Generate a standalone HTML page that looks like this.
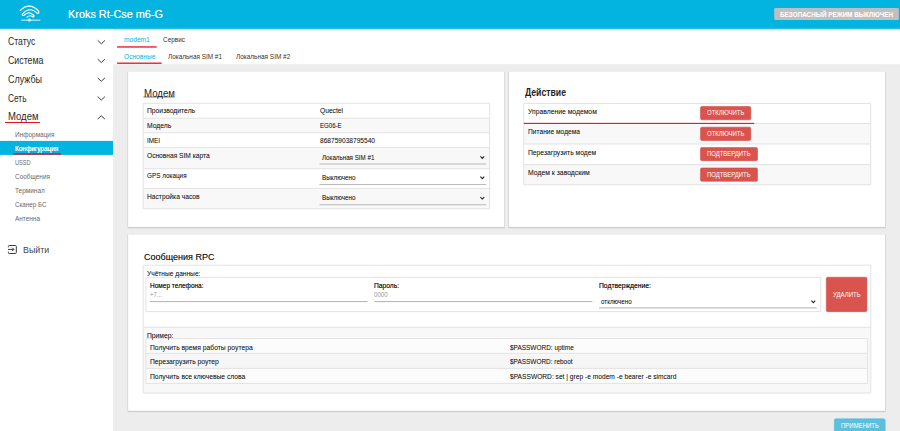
<!DOCTYPE html>
<html lang="ru"><head><meta charset="utf-8"><title>Kroks Rt-Cse m6-G</title>
<style>
html,body{margin:0;padding:0;width:900px;height:431px;overflow:hidden;background:#ededed}
#p{position:relative;width:900px;height:431px;overflow:hidden;font-family:"Liberation Sans",sans-serif}
#p svg{position:absolute;left:0;top:0}
#p span{position:absolute;white-space:pre;transform-origin:0 50%;line-height:12px;height:12px;}
#p b{font-weight:bold}
</style></head><body><div id="p">
<svg width="900" height="431" viewBox="0 0 900 431">
<rect x="0.00" y="0.00" width="900.00" height="431.00" fill="#ededed"/>
<rect x="0.00" y="28.00" width="113.10" height="403.00" fill="#fff"/>
<rect x="113.10" y="28.00" width="786.90" height="36.20" fill="#fff"/>
<rect x="0.00" y="0.00" width="900.00" height="28.90" fill="#03b4e1"/>
<rect x="0.00" y="28.90" width="113.10" height="1.10" fill="#ecdfdb"/>
<rect x="113.10" y="28.90" width="786.90" height="1.10" fill="#dcd2ce"/>
<rect x="113.10" y="30.00" width="786.90" height="1.00" fill="#f3f3f3"/>
<g fill="none" stroke="#fff" stroke-linecap="round" stroke-linejoin="round"><path d="M20.3 10.5 Q29.5 1.7 38.5 11.0 Q39.6 13.4 37.4 13.3 Q29.6 5.9 22.5 13.8 Q21.7 15.8 23.7 15.5 Q28.9 10.3 33.8 15.5 Q34.4 17.2 33.0 17.0 Q29.9 14.4 27.0 17.2" stroke-width="1.15"/><path d="M21.2 20.15 H40.4" stroke-width="0.85" stroke-linecap="butt"/></g><circle cx="29.3" cy="20.1" r="1.5" fill="#fff"/>
<rect x="774.20" y="7.90" width="124.70" height="12.20" fill="#bfbfbf" rx="1.3"/>
<path d="M97.7 40.40 L101.3 43.80 L104.9 40.40" fill="none" stroke="#3c3c3c" stroke-width="1.0"/>
<path d="M97.7 59.15 L101.3 62.55 L104.9 59.15" fill="none" stroke="#3c3c3c" stroke-width="1.0"/>
<path d="M97.7 77.90 L101.3 81.30 L104.9 77.90" fill="none" stroke="#3c3c3c" stroke-width="1.0"/>
<path d="M97.7 96.65 L101.3 100.05 L104.9 96.65" fill="none" stroke="#3c3c3c" stroke-width="1.0"/>
<path d="M97.7 119.10 L101.3 115.80 L104.9 119.10" fill="none" stroke="#3c3c3c" stroke-width="1.0"/>
<rect x="5.00" y="122.00" width="35.00" height="1.00" fill="#e4111f"/>
<rect x="0.00" y="140.90" width="113.10" height="14.00" fill="#03b4e1"/>
<rect x="13.00" y="153.30" width="48.00" height="1.40" fill="#e4111f"/>
<g fill="none" stroke="#3a3a3a" stroke-width="1.0" stroke-linejoin="round"><path d="M8.4 247.3 V246.4 Q8.4 245.5 9.3 245.5 H15.4 Q16.3 245.5 16.3 246.4 V252.6 Q16.3 253.5 15.4 253.5 H9.3 Q8.4 253.5 8.4 252.6 V251.6"/><path d="M8.0 249.4 H13.8 M12.1 247.6 L13.9 249.4 L12.1 251.2"/></g>
<rect x="117.10" y="46.30" width="39.60" height="1.30" fill="#e4111f"/>
<rect x="117.10" y="62.55" width="44.50" height="1.30" fill="#e4111f"/>
<rect x="127.80" y="71.70" width="376.80" height="156.70" fill="#c6c6c6" opacity="0.55"/>
<rect x="127.50" y="72.00" width="377.40" height="155.80" fill="#c2c2c2" opacity="0.6"/>
<rect x="128.10" y="71.70" width="376.20" height="155.20" fill="#fff"/>
<rect x="143.40" y="96.70" width="31.00" height="0.60" fill="#1f1f1f"/>
<rect x="143.20" y="118.20" width="346.50" height="14.60" fill="#f8f8f8"/>
<rect x="143.20" y="147.40" width="346.50" height="21.30" fill="#f8f8f8"/>
<rect x="143.20" y="188.50" width="346.50" height="20.20" fill="#f8f8f8"/>
<rect x="143.20" y="102.80" width="346.50" height="1.00" fill="#e3e3e3"/>
<rect x="143.20" y="117.70" width="346.50" height="1.00" fill="#e3e3e3"/>
<rect x="143.20" y="132.30" width="346.50" height="1.00" fill="#e3e3e3"/>
<rect x="143.20" y="146.90" width="346.50" height="1.00" fill="#e3e3e3"/>
<rect x="143.20" y="168.20" width="346.50" height="1.00" fill="#e3e3e3"/>
<rect x="143.20" y="188.00" width="346.50" height="1.00" fill="#e3e3e3"/>
<rect x="143.20" y="208.20" width="346.50" height="1.00" fill="#e3e3e3"/>
<rect x="142.70" y="103.30" width="1.00" height="105.40" fill="#e3e3e3"/>
<rect x="489.20" y="103.30" width="1.00" height="105.40" fill="#e3e3e3"/>
<rect x="319.50" y="163.30" width="166.60" height="1.40" fill="#cbcbcb"/>
<path d="M480.40 156.40 L482.30 158.40 L484.20 156.40" fill="none" stroke="#222" stroke-width="1.05"/>
<rect x="319.50" y="184.10" width="166.60" height="0.80" fill="#a9a9a9"/>
<path d="M480.40 176.70 L482.30 178.70 L484.20 176.70" fill="none" stroke="#222" stroke-width="1.05"/>
<rect x="319.50" y="204.40" width="166.60" height="0.80" fill="#a9a9a9"/>
<path d="M480.40 197.10 L482.30 199.10 L484.20 197.10" fill="none" stroke="#222" stroke-width="1.05"/>
<rect x="508.50" y="71.70" width="376.90" height="156.70" fill="#c6c6c6" opacity="0.55"/>
<rect x="508.20" y="72.00" width="377.50" height="155.80" fill="#c2c2c2" opacity="0.6"/>
<rect x="508.80" y="71.70" width="376.30" height="155.20" fill="#fff"/>
<rect x="523.80" y="123.50" width="346.90" height="20.50" fill="#f8f8f8"/>
<rect x="523.80" y="164.60" width="346.90" height="20.10" fill="#f8f8f8"/>
<rect x="523.80" y="102.90" width="346.90" height="1.00" fill="#e3e3e3"/>
<rect x="523.80" y="123.00" width="346.90" height="1.00" fill="#e3e3e3"/>
<rect x="523.80" y="143.50" width="346.90" height="1.00" fill="#e3e3e3"/>
<rect x="523.80" y="164.10" width="346.90" height="1.00" fill="#e3e3e3"/>
<rect x="523.80" y="184.20" width="346.90" height="1.00" fill="#e3e3e3"/>
<rect x="523.30" y="103.40" width="1.00" height="81.30" fill="#e3e3e3"/>
<rect x="870.20" y="103.40" width="1.00" height="81.30" fill="#e3e3e3"/>
<rect x="523.80" y="122.85" width="230.40" height="1.10" fill="#e4111f"/>
<rect x="700.50" y="106.50" width="50.30" height="13.30" fill="#d9534f" rx="1.4" stroke="#d2433e" stroke-width="0.5"/>
<rect x="700.50" y="127.20" width="50.30" height="13.30" fill="#d9534f" rx="1.4" stroke="#d2433e" stroke-width="0.5"/>
<rect x="700.50" y="147.60" width="57.00" height="13.10" fill="#d9534f" rx="1.4" stroke="#d2433e" stroke-width="0.5"/>
<rect x="700.50" y="167.90" width="57.00" height="13.40" fill="#d9534f" rx="1.4" stroke="#d2433e" stroke-width="0.5"/>
<rect x="127.80" y="234.40" width="757.60" height="177.90" fill="#c6c6c6" opacity="0.55"/>
<rect x="127.50" y="234.70" width="758.20" height="177.00" fill="#c2c2c2" opacity="0.6"/>
<rect x="128.10" y="234.40" width="757.00" height="176.40" fill="#fff"/>
<rect x="143.20" y="327.30" width="727.60" height="65.70" fill="#f8f8f8"/>
<rect x="143.20" y="264.70" width="727.60" height="1.00" fill="#e3e3e3"/>
<rect x="143.20" y="326.80" width="727.60" height="1.00" fill="#e3e3e3"/>
<rect x="143.20" y="392.50" width="727.60" height="1.00" fill="#e3e3e3"/>
<rect x="142.70" y="265.20" width="1.00" height="127.80" fill="#e3e3e3"/>
<rect x="870.30" y="265.20" width="1.00" height="127.80" fill="#e3e3e3"/>
<rect x="145.90" y="277.30" width="674.90" height="34.30" fill="#fff"/>
<rect x="145.40" y="276.80" width="675.90" height="1.00" fill="#e3e3e3"/>
<rect x="145.40" y="311.10" width="675.90" height="1.00" fill="#e3e3e3"/>
<rect x="145.40" y="277.30" width="1.00" height="34.30" fill="#e3e3e3"/>
<rect x="820.30" y="277.30" width="1.00" height="34.30" fill="#e3e3e3"/>
<rect x="149.80" y="301.10" width="217.80" height="1.00" fill="#b2b2b2"/>
<rect x="374.40" y="301.10" width="218.00" height="1.00" fill="#b2b2b2"/>
<rect x="599.00" y="307.40" width="217.70" height="1.00" fill="#b2b2b2"/>
<path d="M811.40 300.70 L813.30 302.70 L815.20 300.70" fill="none" stroke="#222" stroke-width="1.05"/>
<rect x="826.30" y="277.20" width="40.60" height="34.50" fill="#d9534f" rx="1.4" stroke="#d2433e" stroke-width="0.5"/>
<rect x="145.90" y="338.50" width="721.60" height="44.90" fill="#fcfcfc"/>
<rect x="145.90" y="353.30" width="721.60" height="15.10" fill="#f6f6f6"/>
<rect x="145.90" y="338.00" width="721.60" height="1.00" fill="#e3e3e3"/>
<rect x="145.90" y="352.80" width="721.60" height="1.00" fill="#e3e3e3"/>
<rect x="145.90" y="367.90" width="721.60" height="1.00" fill="#e3e3e3"/>
<rect x="145.90" y="382.90" width="721.60" height="1.00" fill="#e3e3e3"/>
<rect x="145.40" y="338.50" width="1.00" height="44.90" fill="#e3e3e3"/>
<rect x="867.00" y="338.50" width="1.00" height="44.90" fill="#e3e3e3"/>
<rect x="834.30" y="418.80" width="50.90" height="14.20" fill="#5bc0de" rx="1.6" stroke="#4cb5d6" stroke-width="0.5"/>
</svg>
<header>
<span style="left:68.3px;top:8.1px;font-size:11.7px;color:#fff;transform:scaleX(0.932);text-shadow:0 0 .4px rgba(255,255,255,.8);">Kroks Rt-Cse m6-G</span>
<span style="left:780.2px;top:8.7px;font-size:6.3px;color:#fff;transform:scaleX(1.008);font-weight:bold;">БЕЗОПАСНЫЙ РЕЖИМ ВЫКЛЮЧЕН</span>
</header>
<nav>
<span style="left:7.6px;top:36.4px;font-size:10.0px;color:#2a2a2a;transform:scaleX(0.860);">Статус</span>
<span style="left:7.6px;top:55.2px;font-size:10.0px;color:#2a2a2a;transform:scaleX(0.881);">Система</span>
<span style="left:7.6px;top:73.9px;font-size:10.0px;color:#2a2a2a;transform:scaleX(0.897);">Службы</span>
<span style="left:7.6px;top:92.7px;font-size:10.0px;color:#2a2a2a;transform:scaleX(0.831);">Сеть</span>
<span style="left:7.6px;top:111.4px;font-size:10.0px;color:#2a2a2a;transform:scaleX(0.951);">Модем</span>
<span style="left:15.4px;top:128.9px;font-size:6.6px;color:#6a6a6a;transform:scaleX(0.976);">Информация</span>
<span style="left:15.4px;top:142.8px;font-size:6.6px;color:#fff;transform:scaleX(0.980);text-shadow:0 0 0.4px #fff;">Конфигурация</span>
<span style="left:15.4px;top:156.8px;font-size:6.6px;color:#6a6a6a;transform:scaleX(0.846);">USSD</span>
<span style="left:15.4px;top:170.8px;font-size:6.6px;color:#6a6a6a;transform:scaleX(0.978);">Сообщения</span>
<span style="left:15.4px;top:184.7px;font-size:6.6px;color:#6a6a6a;transform:scaleX(0.981);">Терминал</span>
<span style="left:15.4px;top:198.7px;font-size:6.6px;color:#6a6a6a;transform:scaleX(0.946);">Сканер БС</span>
<span style="left:15.4px;top:212.6px;font-size:6.6px;color:#6a6a6a;transform:scaleX(0.976);">Антенна</span>
<span style="left:22.8px;top:243.6px;font-size:9.0px;color:#444;transform:scaleX(0.983);">Выйти</span>
</nav>
<main>
<span style="left:123.8px;top:34.0px;font-size:7.2px;color:#03b4e1;transform:scaleX(0.922);">modem1</span>
<span style="left:162.9px;top:34.0px;font-size:7.2px;color:#333;transform:scaleX(0.893);">Сервис</span>
<span style="left:123.8px;top:50.5px;font-size:7.2px;color:#03b4e1;transform:scaleX(0.918);">Основные</span>
<span style="left:168.2px;top:50.5px;font-size:7.2px;color:#333;transform:scaleX(0.891);">Локальная SIM #1</span>
<span style="left:236.2px;top:50.5px;font-size:7.2px;color:#333;transform:scaleX(0.895);">Локальная SIM #2</span>
<span style="left:143.5px;top:87.1px;font-size:10.6px;color:#1f1f1f;transform:scaleX(0.913);">Модем</span>
<span style="left:146.7px;top:105.4px;font-size:7.4px;color:#1e1e1e;transform:scaleX(0.914);text-shadow:0 0 .3px rgba(0,0,0,.3);">Производитель</span>
<span style="left:319.5px;top:105.4px;font-size:7.4px;color:#1e1e1e;transform:scaleX(0.903);text-shadow:0 0 .3px rgba(0,0,0,.3);">Quectel</span>
<span style="left:146.7px;top:120.1px;font-size:7.4px;color:#1e1e1e;transform:scaleX(0.916);text-shadow:0 0 .3px rgba(0,0,0,.3);">Модель</span>
<span style="left:319.5px;top:120.1px;font-size:7.4px;color:#1e1e1e;transform:scaleX(0.825);text-shadow:0 0 .3px rgba(0,0,0,.3);">EG06-E</span>
<span style="left:146.7px;top:135.0px;font-size:7.4px;color:#1e1e1e;transform:scaleX(0.849);text-shadow:0 0 .3px rgba(0,0,0,.3);">IMEI</span>
<span style="left:319.5px;top:135.0px;font-size:7.4px;color:#1e1e1e;transform:scaleX(0.892);text-shadow:0 0 .3px rgba(0,0,0,.3);">868759038795540</span>
<span style="left:146.7px;top:150.0px;font-size:7.4px;color:#1e1e1e;transform:scaleX(0.896);text-shadow:0 0 .3px rgba(0,0,0,.3);">Основная SIM карта</span>
<span style="left:146.7px;top:170.0px;font-size:7.4px;color:#1e1e1e;transform:scaleX(0.860);text-shadow:0 0 .3px rgba(0,0,0,.3);">GPS локация</span>
<span style="left:146.7px;top:190.7px;font-size:7.4px;color:#1e1e1e;transform:scaleX(0.903);text-shadow:0 0 .3px rgba(0,0,0,.3);">Настройка часов</span>
<span style="left:321.9px;top:152.0px;font-size:6.7px;color:#1e1e1e;transform:scaleX(0.929);text-shadow:0 0 .3px rgba(0,0,0,.3);">Локальная SIM #1</span>
<span style="left:321.9px;top:171.8px;font-size:6.7px;color:#1e1e1e;transform:scaleX(0.940);text-shadow:0 0 .3px rgba(0,0,0,.3);">Выключено</span>
<span style="left:321.9px;top:192.2px;font-size:6.7px;color:#1e1e1e;transform:scaleX(0.940);text-shadow:0 0 .3px rgba(0,0,0,.3);">Выключено</span>
<span style="left:524.7px;top:87.0px;font-size:10.4px;color:#1f1f1f;transform:scaleX(0.835);font-weight:bold;">Действие</span>
<span style="left:528.0px;top:105.5px;font-size:7.4px;color:#1e1e1e;transform:scaleX(0.919);text-shadow:0 0 .3px rgba(0,0,0,.3);">Управление модемом</span>
<span style="left:528.0px;top:126.4px;font-size:7.4px;color:#1e1e1e;transform:scaleX(0.898);text-shadow:0 0 .3px rgba(0,0,0,.3);">Питание модема</span>
<span style="left:528.0px;top:146.6px;font-size:7.4px;color:#1e1e1e;transform:scaleX(0.910);text-shadow:0 0 .3px rgba(0,0,0,.3);">Перезагрузить модем</span>
<span style="left:528.0px;top:166.8px;font-size:7.4px;color:#1e1e1e;transform:scaleX(0.925);text-shadow:0 0 .3px rgba(0,0,0,.3);">Модем к заводским</span>
<span style="left:707.2px;top:107.2px;font-size:6.7px;color:#fff;transform:scaleX(0.894);">ОТКЛЮЧИТЬ</span>
<span style="left:707.2px;top:127.8px;font-size:6.7px;color:#fff;transform:scaleX(0.894);">ОТКЛЮЧИТЬ</span>
<span style="left:707.2px;top:148.1px;font-size:6.7px;color:#fff;transform:scaleX(0.886);">ПОДТВЕРДИТЬ</span>
<span style="left:707.2px;top:168.6px;font-size:6.7px;color:#fff;transform:scaleX(0.886);">ПОДТВЕРДИТЬ</span>
<span style="left:143.8px;top:250.8px;font-size:9.6px;color:#1a1a1a;transform:scaleX(0.939);text-shadow:0 0 0.2px rgba(0,0,0,.5);">Сообщения RPC</span>
<span style="left:146.7px;top:268.2px;font-size:7.4px;color:#1e1e1e;transform:scaleX(0.895);text-shadow:0 0 .3px rgba(0,0,0,.3);">Учётные данные:</span>
<span style="left:150.0px;top:279.6px;font-size:7.4px;color:#1e1e1e;transform:scaleX(0.880);text-shadow:0 0 0.3px rgba(0,0,0,.7);">Номер телефона:</span>
<span style="left:150.0px;top:288.8px;font-size:6.3px;color:#969696;transform:scaleX(0.941);">+7...</span>
<span style="left:374.4px;top:279.6px;font-size:7.4px;color:#1e1e1e;transform:scaleX(0.902);text-shadow:0 0 0.3px rgba(0,0,0,.7);">Пароль:</span>
<span style="left:374.4px;top:288.8px;font-size:6.3px;color:#969696;transform:scaleX(0.970);">0000</span>
<span style="left:599.0px;top:279.6px;font-size:7.4px;color:#1e1e1e;transform:scaleX(0.916);text-shadow:0 0 0.3px rgba(0,0,0,.7);">Подтверждение:</span>
<span style="left:601.3px;top:296.0px;font-size:6.7px;color:#1e1e1e;transform:scaleX(0.926);text-shadow:0 0 .3px rgba(0,0,0,.3);">отключено</span>
<span style="left:833.0px;top:288.6px;font-size:6.7px;color:#fff;transform:scaleX(0.897);">УДАЛИТЬ</span>
<span style="left:146.7px;top:329.5px;font-size:7.4px;color:#1e1e1e;transform:scaleX(0.913);text-shadow:0 0 .3px rgba(0,0,0,.3);">Пример:</span>
<span style="left:150.0px;top:341.9px;font-size:7.4px;color:#1e1e1e;transform:scaleX(0.913);text-shadow:0 0 .3px rgba(0,0,0,.3);">Получить время работы роутера</span>
<span style="left:509.9px;top:341.7px;font-size:7.4px;color:#1e1e1e;transform:scaleX(0.874);text-shadow:0 0 .3px rgba(0,0,0,.3);">$PASSWORD: uptime</span>
<span style="left:150.0px;top:356.4px;font-size:7.4px;color:#1e1e1e;transform:scaleX(0.911);text-shadow:0 0 .3px rgba(0,0,0,.3);">Перезагрузить роутер</span>
<span style="left:509.9px;top:356.2px;font-size:7.4px;color:#1e1e1e;transform:scaleX(0.872);text-shadow:0 0 .3px rgba(0,0,0,.3);">$PASSWORD: reboot</span>
<span style="left:150.0px;top:370.8px;font-size:7.4px;color:#1e1e1e;transform:scaleX(0.909);text-shadow:0 0 .3px rgba(0,0,0,.3);">Получить все ключевые слова</span>
<span style="left:509.9px;top:370.6px;font-size:7.4px;color:#1e1e1e;transform:scaleX(0.898);text-shadow:0 0 .3px rgba(0,0,0,.3);">$PASSWORD: set | grep -e modem -e bearer -e simcard</span>
<span style="left:840.8px;top:419.5px;font-size:6.7px;color:#fff;transform:scaleX(0.900);">ПРИМЕНИТЬ</span>
</main>
</div></body></html>
